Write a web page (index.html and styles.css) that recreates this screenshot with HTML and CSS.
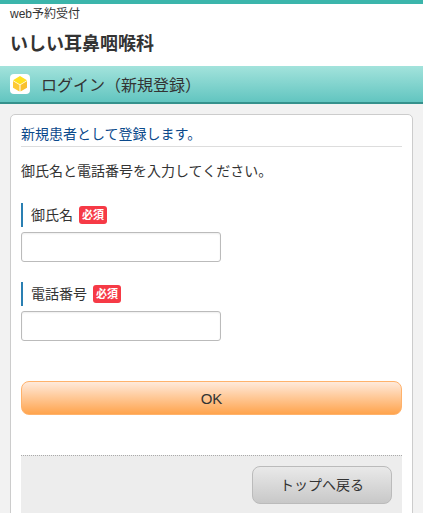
FILE: index.html
```html
<!DOCTYPE html>
<html lang="ja">
<head>
<meta charset="utf-8">
<title>いしい耳鼻咽喉科</title>
<link rel="stylesheet" href="styles.css">
</head>
<body>
<header class="site-header">
  <p class="site-sub">web予約受付</p>
  <h1 class="site-title">いしい耳鼻咽喉科</h1>
</header>
<div class="banner">
  <span class="banner-icon">
    <svg viewBox="0 0 20 20" width="20" height="20" aria-hidden="true">
      <rect width="20" height="20" rx="4" fill="#fff"/>
      <path d="M10 2 L17 6.2 L10 10.4 L3 6.2 Z" fill="#ffe01f"/>
      <path d="M3 7 L9.5 11 L9.5 17.6 L3 13.8 Z" fill="#fdc935"/>
      <path d="M17 7 L10.5 11 L10.5 17.6 L17 13.8 Z" fill="#f9c02e"/>
    </svg>
  </span>
  <h2 class="banner-title">ログイン（新規登録）</h2>
</div>
<main class="card">
  <h3 class="card-heading">新規患者として登録します。</h3>
  <p class="lead">御氏名と電話番号を入力してください。</p>
  <form class="form">
    <div class="field">
      <label class="field-label"><span class="label-text">御氏名</span><span class="required">必須</span></label>
      <input class="text-input" type="text">
    </div>
    <div class="field">
      <label class="field-label"><span class="label-text">電話番号</span><span class="required">必須</span></label>
      <input class="text-input" type="tel">
    </div>
    <button class="ok-button" type="button">OK</button>
  </form>
  <div class="card-footer">
    <button class="back-button" type="button">トップへ戻る</button>
  </div>
</main>
</body>
</html>
```
FILE: styles.css
```css
* { box-sizing: border-box; }
html, body { margin: 0; height: 100%; overflow: hidden; }
body {
  background: #f2f2f2;
  color: #333;
  font-family: "Liberation Sans", "Noto Sans CJK JP", sans-serif;
}
h1, h2, h3, p { margin: 0; font-weight: normal; }

.site-header {
  height: 66px;
  background: #fff;
  border-top: 4px solid #3bb5ab;
  padding: 1px 10px 0;
}
.site-sub { font-size: 12px; line-height: 18px; }
.site-title {
  margin-top: 8px;
  font-size: 18px;
  line-height: 26px;
  font-weight: bold;
}

.banner {
  height: 38px;
  display: flex;
  align-items: center;
  gap: 11px;
  padding: 0 10px;
  background: linear-gradient(#a3e3dc, #62c5c0);
  border-bottom: 2px solid #35918c;
}
.banner-icon { display: flex; width: 20px; height: 20px; }
.banner-title { padding-top: 3px; font-size: 16px; line-height: 22px; }

.card {
  margin: 10px 10px 0;
  padding: 10px 10px 0;
  height: 500px;
  background: #fff;
  border: 1px solid #ccc;
  border-radius: 5px;
}
.card-heading {
  height: 22px;
  font-size: 14px;
  line-height: 18px;
  color: #0b4a8c;
  border-bottom: 1px solid #ddd;
}
.lead { margin-top: 13px; font-size: 14px; line-height: 22px; }

.form { display: flex; flex-direction: column; }
.field { display: flex; flex-direction: column; gap: 5px; margin-bottom: 20px; }
.form .field:first-child { margin-top: 21px; }
.field-label {
  display: flex;
  align-items: center;
  gap: 6px;
  height: 24px;
  padding-left: 8px;
  border-left: 2px solid #2a7fb2;
  font-size: 14px;
}
.label-text { margin-bottom: 2px; }
.required {
  width: 28px;
  height: 18px;
  border-radius: 3px;
  background: #f63a46;
  color: #fff;
  font-size: 11px;
  line-height: 18px;
  font-weight: bold;
  text-align: center;
}
.text-input {
  width: 200px;
  height: 30px;
  background: #fff;
  border: 1px solid #bbb;
  border-radius: 3px;
  box-shadow: inset 0 1px 2px #eee;
}
.ok-button {
  height: 34px;
  margin-top: 20px;
  padding: 0;
  border: 1px solid #ffb26b;
  border-radius: 8px;
  background: linear-gradient(#ffeadb, #ffa44d);
  color: #333;
  font: 15px "Liberation Sans", "Noto Sans CJK JP", sans-serif;
}
.card-footer {
  display: flex;
  justify-content: flex-end;
  margin-top: 40px;
  height: 100px;
  padding: 10px 10px 0;
  background: #ededed;
  border-top: 1px dotted #aaa;
}
.back-button {
  width: 140px;
  height: 38px;
  padding: 0 0 3px;
  border: 1px solid #bbb;
  border-radius: 8px;
  background: linear-gradient(#e9e9e9, #c8c8c8);
  color: #333;
  font: 14px "Liberation Sans", "Noto Sans CJK JP", sans-serif;
}
```
